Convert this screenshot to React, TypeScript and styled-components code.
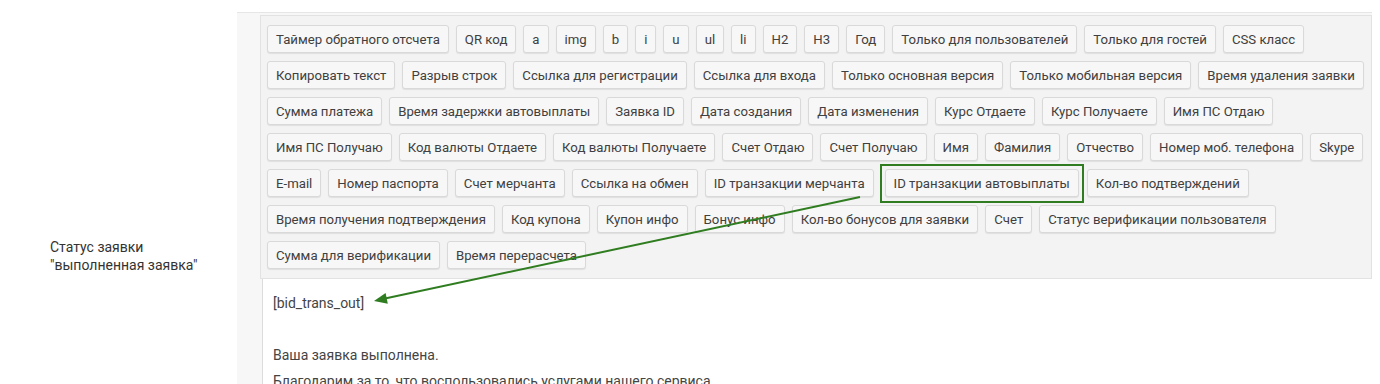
import React from 'react'
import styled, { createGlobalStyle } from 'styled-components'

const GlobalStyle = createGlobalStyle`
  html, body {
    margin: 0;
    padding: 0;
    background: #fff;
  }
  body {
    font-family: Roboto, "Liberation Sans", Arial, sans-serif;
  }
`

const Page = styled.div`
  position: relative;
  display: flex;
  width: 1380px;
  height: 384px;
  overflow: hidden;
  background: #fff;
`

const LabelCell = styled.div`
  width: 237px;
  flex-shrink: 0;
  box-sizing: border-box;
  padding: 238px 0 0 50px;
  font-size: 14px;
  line-height: 18px;
  color: #333;
`

const FieldCell = styled.div`
  width: 1135px;
  flex-shrink: 0;
  box-sizing: border-box;
  margin-top: 12px;
  border-top: 1px solid #e6e6e6;
  background: #f7f7f7;
  padding: 2px 0 0 23px;
  display: flex;
  flex-direction: column;
`

const Toolbar = styled.div`
  box-sizing: border-box;
  border: 1px solid #e2e2e2;
  background: #f3f3f3;
  padding: 9px 6px 9px 6px;
  display: flex;
  flex-direction: column;
  gap: 8px;
`

const ButtonRow = styled.div`
  display: flex;
  gap: 7px;
`

const TagButton = styled.button<{ $marked?: boolean }>`
  position: relative;
  height: 28px;
  box-sizing: border-box;
  padding: 0 8px;
  border: 1px solid #d9d9d9;
  border-radius: 3px;
  background: #f7f7f7;
  box-shadow: 0 1px 1px rgba(0, 0, 0, 0.08);
  font-family: Roboto, "Liberation Sans", Arial, sans-serif;
  font-size: 13.2px;
  color: #404040;
  white-space: nowrap;
  cursor: pointer;
  ${(p) =>
    p.$marked
      ? `
        margin: 0 1px 0 4px;
        &::after {
          content: '';
          position: absolute;
          left: -6px;
          right: -6px;
          top: -6px;
          bottom: -7px;
          border: 2px solid #2f7d20;
          pointer-events: none;
        }
      `
      : ''}
`

const Editor = styled.div`
  flex: 1;
  margin-left: 2px;
  border-left: 1px solid #dcdcdc;
  background: #fff;
  padding: 11px 10px;
  font-size: 14px;
  line-height: 26px;
  color: #444;
`

const Line = styled.div`
  min-height: 26px;
`

const Overlay = styled.svg`
  position: absolute;
  left: 0;
  top: 0;
  pointer-events: none;
`

const rows: string[][] = [
  ['Таймер обратного отсчета', 'QR код', 'a', 'img', 'b', 'i', 'u', 'ul', 'li', 'H2', 'H3', 'Год', 'Только для пользователей', 'Только для гостей', 'CSS класс'],
  ['Копировать текст', 'Разрыв строк', 'Ссылка для регистрации', 'Ссылка для входа', 'Только основная версия', 'Только мобильная версия', 'Время удаления заявки'],
  ['Сумма платежа', 'Время задержки автовыплаты', 'Заявка ID', 'Дата создания', 'Дата изменения', 'Курс Отдаете', 'Курс Получаете', 'Имя ПС Отдаю'],
  ['Имя ПС Получаю', 'Код валюты Отдаете', 'Код валюты Получаете', 'Счет Отдаю', 'Счет Получаю', 'Имя', 'Фамилия', 'Отчество', 'Номер моб. телефона', 'Skype'],
  ['E-mail', 'Номер паспорта', 'Счет мерчанта', 'Ссылка на обмен', 'ID транзакции мерчанта', 'ID транзакции автовыплаты', 'Кол-во подтверждений'],
  ['Время получения подтверждения', 'Код купона', 'Купон инфо', 'Бонус инфо', 'Кол-во бонусов для заявки', 'Счет', 'Статус верификации пользователя'],
  ['Сумма для верификации', 'Время перерасчета'],
]

const MARKED = 'ID транзакции автовыплаты'

const App: React.FC = () => {
  return (
    <>
      <GlobalStyle />
      <Page>
        <LabelCell>
          Статус заявки
          <br />
          "выполненная заявка"
        </LabelCell>
        <FieldCell>
          <Toolbar>
            {rows.map((row, i) => (
              <ButtonRow key={i}>
                {row.map((label) => (
                  <TagButton key={label} type="button" $marked={label === MARKED}>
                    {label}
                  </TagButton>
                ))}
              </ButtonRow>
            ))}
          </Toolbar>
          <Editor>
            <Line>[bid_trans_out]</Line>
            <Line />
            <Line>Ваша заявка выполнена.</Line>
            <Line>Благодарим за то, что воспользовались услугами нашего сервиса.</Line>
          </Editor>
        </FieldCell>
        <Overlay width="1380" height="384" viewBox="0 0 1380 384">
          <line x1="860" y1="197" x2="385" y2="298.5" stroke="#2f7d20" strokeWidth="2" />
          <polygon points="374,301 387.8,303.7 385.6,292.9" fill="#2f7d20" />
        </Overlay>
      </Page>
    </>
  )
}

export default App
